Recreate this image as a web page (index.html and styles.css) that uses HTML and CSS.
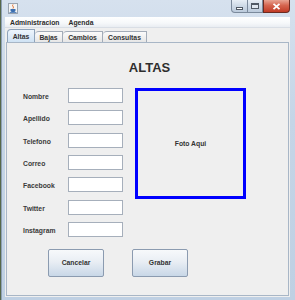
FILE: index.html
```html
<!DOCTYPE html>
<html lang="es">
<head>
	<meta charset="UTF-8">
	<title>Altas</title>
	<link rel="stylesheet" href="styles.css">
</head>
<body>
	<div class="window">
		<div class="titlebar">
			<svg class="app-icon" width="10" height="11" viewBox="0 0 10 11">
				<rect x="0.5" y="0.5" width="9" height="10" fill="#f4f4f4" stroke="#9aa4b0"/>
				<path d="M5 1.5 C3.5 3 6.5 3.5 5 5.5" stroke="#e0641e" fill="none" stroke-width="1"/>
				<path d="M2.5 6 h5 v1.5 c0 1 -1 1.5 -2.5 1.5 s-2.5 -0.5 -2.5 -1.5 z" fill="#3b6fb0"/>
				<path d="M1.5 9.5 h7" stroke="#3b6fb0" stroke-width="0.8"/>
			</svg>
			<div class="caption">
				<span class="cap-btn min"><i></i></span>
				<span class="cap-btn max"><i></i></span>
				<span class="cap-btn close">
					<svg width="9" height="7" viewBox="0 0 9 7">
						<path d="M1.5 0.8 L7.5 6.2 M7.5 0.8 L1.5 6.2" stroke="#fff" stroke-width="1.8"/>
					</svg>
				</span>
			</div>
		</div>
		<div class="menubar">
			<span>Administracion</span>
			<span>Agenda</span>
		</div>
		<div class="client">
			<div class="tabs">
				<span class="tab selected">Altas</span>
				<span class="tab">Bajas</span>
				<span class="tab">Cambios</span>
				<span class="tab">Consultas</span>
			</div>
			<div class="panel">
				<h1>ALTAS</h1>
				<div class="content">
					<div class="fields">
						<label>Nombre</label><input type="text">
						<label>Apellido</label><input type="text">
						<label>Telefono</label><input type="text">
						<label>Correo</label><input type="text">
						<label>Facebook</label><input type="text">
						<label>Twitter</label><input type="text">
						<label>Instagram</label><input type="text">
					</div>
					<div class="foto">Foto Aqui</div>
				</div>
				<div class="actions">
					<button>Cancelar</button>
					<button>Grabar</button>
				</div>
			</div>
		</div>
	</div>
</body>
</html>
```

FILE: styles.css
```css
*{
	margin: 0;
	padding: 0;
	box-sizing: border-box;
}
body{
	width: 295px;
	height: 300px;
	background: #56684a;
	font-family: "Liberation Sans", Arial, sans-serif;
	overflow: hidden;
}
.window{
	display: flex;
	flex-direction: column;
	width: 294px;
	height: 300px;
	margin-left: 1px;
	padding: 0 5px 3px 3px;
	background: linear-gradient(#d6e1ee, #c5d5e7 40%, #bfd0e3);
	border-left: 1px solid #8ea0b5;
}
.titlebar{
	display: flex;
	justify-content: space-between;
	align-items: flex-start;
	height: 17px;
}
.app-icon{
	margin: 3px 0 0 3px;
}
.caption{
	display: flex;
}
.cap-btn{
	display: flex;
	justify-content: center;
	align-items: center;
	height: 13px;
	border: 1px solid #7b8a9c;
	border-top: none;
	background: linear-gradient(#e7eef6, #cdd9e6 50%, #bccbdc);
}
.min{
	width: 17px;
	border-bottom-left-radius: 4px;
}
.min i{
	display: block;
	width: 7px;
	height: 3px;
	margin-top: 4px;
	border: 1px solid #505a66;
	background: #fff;
}
.max{
	width: 15px;
	border-left: none;
}
.max i{
	display: block;
	width: 8px;
	height: 6px;
	border: 1px solid #505a66;
	border-top-width: 2px;
	background: #dfe7f0;
}
.close{
	width: 27px;
	border: 1px solid #6b2b22;
	border-top: none;
	border-bottom-right-radius: 4px;
	background: linear-gradient(#e8a493, #d5654f 45%, #c13b26);
}
.menubar{
	display: flex;
	gap: 9px;
	height: 11px;
	padding-left: 5px;
	align-items: center;
	background: linear-gradient(#ffffff, #f6f8fa 60%, #e9edf2);
	border-bottom: 1px solid #d9dee5;
	font-size: 6.8px;
	font-weight: bold;
	color: #2b2b2b;
}
.client{
	display: flex;
	flex-direction: column;
	flex: 1;
	padding: 1px 0 1px 1px;
	background: #efefef;
}
.tabs{
	display: flex;
	align-items: flex-end;
	height: 13px;
	padding-left: 1px;
}
.tab{
	display: flex;
	justify-content: center;
	align-items: center;
	height: 11px;
	padding: 0 5px;
	border: 1px solid #a3acb8;
	border-bottom: none;
	border-left: none;
	border-top-left-radius: 4px;
	background: linear-gradient(#fbfbfb, #e6e6e6);
	font-size: 6.8px;
	font-weight: bold;
	color: #333;
}
.tab:nth-child(1){ width: 28px; }
.tab:nth-child(2){ width: 28px; }
.tab:nth-child(3){ width: 40px; }
.tab:nth-child(4){ width: 44px; }
.tab.selected{
	height: 13px;
	border-left: 1px solid #8fa3ba;
	border-color: #8fa3ba;
	background: linear-gradient(#eef5fc, #cfe2f4);
}
.panel{
	display: flex;
	flex-direction: column;
	flex: 1;
	margin-right: 1px;
	border: 1px solid #a8b6c6;
	background: #efefef;
	color: #3a3a3a;
}
h1{
	margin-top: 17px;
	font-size: 13px;
	line-height: 15px;
	text-align: center;
	color: #2e2e2e;
	padding-left: 4px;
}
.content{
	display: flex;
	gap: 12px;
	margin: 13px 0 0 16px;
}
.fields{
	display: grid;
	grid-template-columns: 45px 55px;
	row-gap: 7.33px;
	align-items: center;
}
label{
	font-size: 6.8px;
	font-weight: bold;
	color: #3a3a3a;
	padding-top: 2px;
}
input{
	width: 55px;
	height: 15px;
	border: 1px solid #a6afbb;
	background: #fff;
}
.foto{
	display: flex;
	justify-content: center;
	align-items: center;
	width: 111px;
	height: 111px;
	border: 3px solid #0000ff;
	font-size: 6.8px;
	font-weight: bold;
	color: #333;
}
.actions{
	display: flex;
	gap: 28px;
	margin: 12px 0 0 41px;
}
button{
	width: 56px;
	height: 28px;
	border: 1px solid #8b9bb0;
	border-radius: 2px;
	background: linear-gradient(#f7f9fb, #e9eef4 45%, #c8d7e7);
	font-family: "Liberation Sans", Arial, sans-serif;
	font-size: 6.8px;
	font-weight: bold;
	color: #333;
}
```
